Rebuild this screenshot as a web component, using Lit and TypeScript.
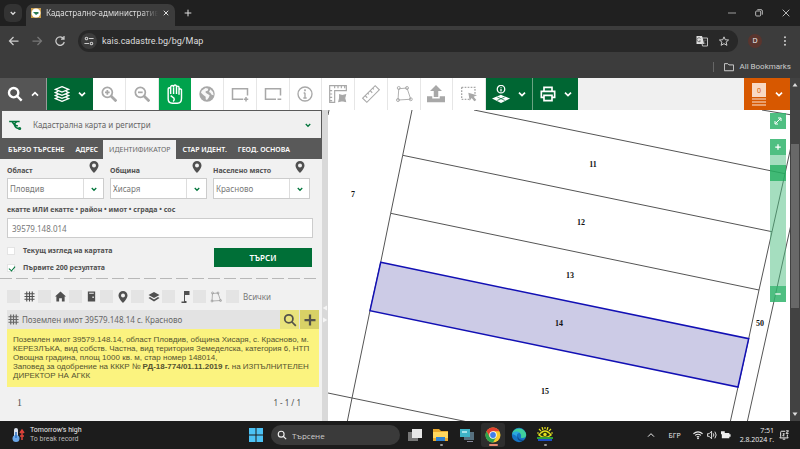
import { LitElement, html, css, svg, nothing, type TemplateResult } from "lit";
import { customElement, state } from "lit/decorators.js";
import { classMap } from "lit/directives/class-map.js";

/* Line icons share a 24-unit box and take the colour of their parent. */
const line = (size: string, width: number, body: unknown) => html`
  <svg class="icon ${size}" viewBox="0 0 24 24" fill="none" stroke="currentColor" stroke-width=${width} aria-hidden="true">${body}</svg>`;
const solid = (size: string, body: unknown) => html`
  <svg class="icon ${size}" viewBox="0 0 24 24" fill="currentColor" aria-hidden="true">${body}</svg>`;

const chevDown = (size = "s8") => line(size, 5, svg`<path d="M3 8l9 9 9-9"/>`);
const chevUp = (size = "s8") => line(size, 5, svg`<path d="M3 17l9-9 9 9"/>`);
const lens = svg`<circle cx="10" cy="10" r="7"/><path d="M15 15l7 7"/>`;
const gridBody = svg`<path d="M6 1v22M12 1v22M18 1v22M1 6h22M1 12h22M1 18h22"/>`;
const pinBody = svg`<path fill-rule="evenodd" d="M12 0a9 9 0 0 0-9 9c0 6 9 15 9 15s9-9 9-15a9 9 0 0 0-9-9zm0 5a4 4 0 1 1 0 8 4 4 0 0 1 0-8z"/>`;
const polyBody = svg`<path d="M5 5l11-1 5 15-17 1z"/><circle cx="5" cy="4" r="2"/><circle cx="16" cy="4" r="2"/><circle cx="21" cy="19" r="2"/><circle cx="4" cy="20" r="2"/>`;
const globeBody = svg`<circle cx="12" cy="12" r="11.5"/><path fill="#fff" d="M10 3l4 1-1 3-3 1 0 2 3 2 3 2-1 3-3 4-2-1 0-4-3-2-4-4 1-3 3-2zM17 5l4 4 1 5-3-1-2-3-2-1z" opacity=".9"/>`;

interface Tool { label: string; icon: TemplateResult; active?: boolean; }

const tools: Tool[] = [
  { label: "Увеличаване", icon: line("s16", 2.6, svg`<circle cx="9.5" cy="9.5" r="7.5"/><path d="M6 9.5h7M9.5 6v7"/><path d="M15 15l8 8" stroke-width="4"/>`) },
  { label: "Намаляване", icon: line("s16", 2.6, svg`<circle cx="9.5" cy="9.5" r="7.5"/><path d="M6 9.5h7"/><path d="M15 15l8 8" stroke-width="4"/>`) },
  { label: "Местене", active: true, icon: line("s20", 1.7, svg`<path d="M5 14V6a1.5 1.5 0 0 1 3 0V3.500a1.5 1.5 0 0 1 3.500 0V3a1.5 1.5 0 0 1 3.500 0v1a1.5 1.5 0 0 1 3 0v3a1.5 1.5 0 0 1 3 1v9c0 4-2 6-5 6h-6c-3 0-5-2-5-5zM8 6v6M11.500 4v8M15 4v8M18 7v6M8 14l4 3q1 2-1 4"/>`) },
  { label: "Цял обхват", icon: solid("s16", globeBody) },
  { label: "Увеличаване с рамка", icon: line("s18", 2, svg`<path d="M16 19H2V5h20v9M17 19h6M20 16v6"/>`) },
  { label: "Намаляване с рамка", icon: line("s18", 2, svg`<path d="M16 19H2V5h20v9M18 19h5"/>`) },
  { label: "Информация", icon: line("s16", 2, svg`<circle cx="12" cy="12" r="10.5"/><path d="M12 10v8M10 10.5h2M9.5 18h5"/><circle cx="12" cy="6.5" r=".6"/>`) },
  { label: "Измерване на площ", icon: line("s20", 1.4, svg`<path d="M2 2h20v6H8v14H2zM8 2v3M12 2v3M16 2v3M20 2v3M2 8h3M2 12h3M2 16h3M2 20h3"/><path fill="currentColor" d="M14 13l3 1 4-1-1 4 1 4-4-1-4 1 1-4z"/>`) },
  { label: "Измерване на разстояние", icon: line("s20", 1.3, svg`<path d="M2 17L17 2l5 5L7 22zM5 14l2.5 2.5M8 11l1.5 1.5M11 8l2.5 2.5M14 5l1.5 1.5"/>`) },
  { label: "Полигон", icon: line("s18", 1.2, polyBody) },
  { label: "Качване", icon: solid("s18", svg`<path d="M12 0l8 8h-5v8H9V8H4zM0 15h7v3h10v-3h7v8H0z"/>`) },
  { label: "Избор", icon: line("s16", 2, svg`<path stroke-dasharray="2.5 2" d="M1 2h20v10M1 2v18h12"/><path fill="currentColor" stroke="none" d="M11 10l13 4-5 2 4 5-3 2-4-5-3 4z"/>`) },
];

const kinds = [
  { label: "Поземлени имоти", icon: line("s11", 2.4, gridBody) },
  { label: "Сгради", icon: solid("s11", svg`<path d="M12 1l12 11h-3v11h-6v-7H9v7H3V12H0z"/>`) },
  { label: "Обекти", icon: solid("s11", svg`<path fill-rule="evenodd" d="M4 1h16v22H4zM7 4v2h10V4zm7 8v3h3v-3z"/>`) },
  { label: "Адреси", icon: solid("s12", pinBody) },
  { label: "Слоеве", icon: solid("s12", svg`<path d="M12 2l11 6-11 6L1 8zM4 12l8 5 8-5 3 2-11 7-11-7z"/>`) },
  { label: "Геодезични точки", icon: solid("s12", svg`<path d="M10 0h11v8h-9v12h3v4H5v-3h5z"/>`) },
  { label: "Контури", icon: line("s12 pale", 1.5, polyBody) },
];

const chevThin = line("s8", 3, svg`<path d="M3 17l9-9 9 9"/>`);

@customElement("app-root")
export class AppRoot extends LitElement {
  @state() private tab = 2;
  @state() private code = "39579.148.014";

  private tabs = ["БЪРЗО ТЪРСЕНЕ", "АДРЕС", "ИДЕНТИФИКАТОР", "СТАР ИДЕНТ.", "ГЕОД. ОСНОВА"];
  private places = [["Област", "Пловдив"], ["Община", "Хисаря"], ["Населено място", "Красново"]];

  static styles = css`
    :host { display: flex; flex-direction: column; min-height: 100vh; background: #1c1c1c; color: #505050;
      font: 8px/12px "Noto Sans", "Liberation Sans", sans-serif; overflow: hidden; }
    * { box-sizing: border-box; }
    button, select, input { font: inherit; color: inherit; margin: 0; padding: 0; border: 0; border-radius: 0; background: none; }
    button { display: flex; align-items: center; justify-content: center; }
    a { color: inherit; text-decoration: none; }
    .icon { display: block; flex: none; }
    .s6 { width: 6px; height: 6px; } .s8 { width: 8px; height: 8px; } .s10 { width: 10px; height: 10px; }
    .s11 { width: 11px; height: 11px; } .s12 { width: 12px; height: 12px; } .s14 { width: 14px; height: 14px; }
    .s16 { width: 16px; height: 16px; } .s18 { width: 18px; height: 18px; } .s20 { width: 20px; height: 20px; }
    .basket { width: 16px; height: 24px; }
    .pale { color: #999; }

    /* browser window */
    .strip { display: flex; height: 26px; background: #202020; color: #ddd; }
    .tablist { width: 18px; height: 18px; margin: 4px 4px 0; border-radius: 6px; background: #333; }
    .tab { display: flex; align-items: center; gap: 5px; width: 149px; height: 22px; margin-top: 4px; padding: 0 6px 4px 5px;
      border-radius: 7px 7px 0 0; background: #3c3c3c; }
    .favicon { width: 10px; height: 10px; }
    .tabname { flex: 1; overflow: hidden; white-space: nowrap; -webkit-mask-image: linear-gradient(90deg, #000 85%, transparent); }
    .newtab { width: 26px; height: 26px; }
    .win { display: flex; gap: 19px; margin-left: auto; padding-right: 10px; }
    .bar { display: flex; align-items: center; height: 29px; padding: 0 10px 0 8px; background: #3c3c3c; color: #ccc; }
    .nav { display: flex; gap: 11px; padding-right: 12px; }
    .dim { color: #777; }
    .address { flex: 1; display: flex; align-items: center; height: 22px; padding: 0 9px 0 3px; border-radius: 11px; background: #282828; gap: 5px; }
    .site { width: 16px; height: 16px; border-radius: 8px; background: #3c3c3c; }
    .url { flex: 1; min-width: 0; font: 9px/12px Roboto, "Noto Sans", sans-serif; outline: 0; color: #ddd; }
    .address .icon + .icon { margin-left: 6px; }
    .avatar { width: 14px; height: 14px; margin: 0 18px 0 10px; border-radius: 7px; background: #5a352e; color: #eee; font-size: 7px; }
    .marks { display: flex; align-items: center; justify-content: flex-end; height: 23px; padding-right: 9px;
      background: #3c3c3c; color: #ccc; font: 8px/12px Roboto, "Noto Sans", sans-serif; }
    .marks a { padding-left: 10px; border-left: 1px solid #666; display: flex; align-items: center; gap: 5px; height: 10px; }

    /* page */
    .page { flex: 1; display: grid; grid-template-columns: 1fr 10px; }
    .site-body { display: flex; flex-direction: column; min-width: 0; }
    .scroll { display: flex; flex-direction: column; align-items: center; justify-content: space-between; padding: 4px 0; background: #424242; color: #ddd; position: relative; }
    .thumb { position: absolute; top: 66px; height: 164px; left: 1px; right: 1px; background: #686868; }
    .toolbar { display: flex; height: 32px; background: #f0f0f0; color: #fff; }
    .wide { width: 46px; gap: 8px; background: #006633; }
    .wide.find { width: 47px; background: #555; border-right: 1px solid #999; }
    .wide + .wide.print { border-left: 1px solid #6ba383; }
    .wide.list { margin-left: auto; background: #d75800; }
    .tools { display: grid; grid-template-columns: repeat(12, 1fr); width: 393px; background: #fff; }
    .tool { color: #a8a8a8; border-right: 1px solid #e6e6e6; }
    .tool.active { background: #00a24c; color: #fff; border-color: #00a24c; }
    .work { flex: 1; display: grid; grid-template-columns: 322px 6px 1fr; }
    .panel { background: #f1f1f1; display: flex; flex-direction: column; }
    .dark { background: #595959; }
    .theme { display: flex; align-items: center; gap: 11px; height: 27px; margin: 1px 1px 2px 2px; padding: 0 10px 0 6px;
      background: #f0f0f0; color: #666; }
    .theme select { flex: 1; }
    select { appearance: none; outline: 0; }
    .green { color: #00753b; }
    .tabs { display: flex; height: 19px; padding-left: 2px; color: #fff; font-size: 7px; font-weight: 600; }
    .tabs button { padding: 0 5px 0 6px; }
    .tabs button.on { background: #f1f1f1; color: #666; font-weight: 400; padding: 0 6px; }
    .form { padding: 0 9px 0 7px; }
    .places { display: grid; grid-template-columns: repeat(3, 97px); gap: 6px; }
    .caption { display: flex; align-items: center; justify-content: space-between; height: 19px; padding-right: 4px; font-weight: 700; font-size: 7px; }
    .caption label { padding-top: 4px; }
    .caption .icon { margin-bottom: 4px; }
    .choice { display: flex; align-items: center; height: 21px; border: 1px solid #ccc; background: #fff; color: #777; }
    .choice select { flex: 1; min-width: 0; height: 19px; padding-left: 2px; }
    .choice .drop { display: flex; align-items: center; justify-content: center; width: 20px; height: 19px; border-left: 1px solid #ddd; pointer-events: none; }
    .codelabel { display: block; padding: 5px 0 2px; font-weight: 700; font-size: 7px; }
    .code { width: 100%; height: 20px; padding: 0 4px; border: 1px solid #ccc; background: #fff; color: #777; outline: 0; }
    .search { display: flex; justify-content: space-between; align-items: flex-start; padding: 4px 1px 0 0; height: 40px; }
    .opt { display: flex; align-items: center; gap: 8px; height: 17px; font-size: 7px; font-weight: 700; }
    .opt input { appearance: none; width: 8px; height: 8px; background: #fff; border: 1px solid #e4e4e4; position: relative; }
    .opt input:checked::after { content: ""; position: absolute; left: 2px; top: 0; width: 3px; height: 5px; border: solid #00753b; border-width: 0 1px 1px 0; transform: rotate(40deg); }
    .go { width: 98px; height: 19px; margin-top: 6px; background: #006f37; color: #fff; font-weight: 600; }
    .rule { height: 1px; margin-right: 3px; background: repeating-linear-gradient(90deg, #b8b8b8 0 12px, transparent 12px 16px); }
    .kinds { display: flex; align-items: center; height: 31px; padding: 4px 0 0 7px; }
    .kind { display: flex; align-items: center; width: 31px; gap: 4px; white-space: nowrap; }
    .kind input { appearance: none; width: 13px; height: 13px; background: #e4e4e4; flex: none; }
    .kind.all { width: auto; margin-left: 2px; color: #777; }
    .result { margin: 0 3px 0 7px; }
    .head { display: flex; height: 19px; background: #e3e3e3; color: #666; }
    .head a { flex: 1; display: flex; align-items: center; gap: 3px; padding-left: 1px; }
    .head button { width: 19px; margin-left: 1px; background: #e9e37c; color: #53524a; }
    .head button + button { background: #d8d166; }
    .about { margin: 0; padding: 6px; background: #fbf37f; color: #53522f; font: 8px/9px "Liberation Sans", sans-serif; height: 58px; }
    .pager { display: flex; justify-content: space-between; padding: 10px 21px 0 17px; }
    .num { font-family: "Liberation Serif", serif; font-size: 10px; }
    .split { background: #d9d9d9; color: #f5f5f5; display: flex; flex-direction: column; align-items: center; gap: 6px; padding-top: 195px; }
    .map { background: #fff; position: relative; min-height: 311px; }
    .chart { position: absolute; inset: 0; width: 100%; height: 100%; }
    .parcels { fill: none; stroke: #555; stroke-width: 1; }
    .parcel-on { fill: #cccbe6; stroke: #1210b4; stroke-width: 1.5; }
    .names { font: bold 8px "Liberation Serif", serif; fill: #111; text-anchor: middle; }
    .zoom { position: absolute; top: 3px; right: 4px; width: 16px; color: #fff; }
    .zoom button { width: 16px; height: 16px; background: rgba(48, 180, 108, .85); }
    .zoom .full { margin-bottom: 10px; }
    .track { height: 131px; padding-top: 10px; background: rgba(76, 190, 128, .5); }
    .knob { height: 16px; background: rgba(31, 172, 92, .75); }

    /* taskbar */
    .task { display: grid; grid-template-columns: 1fr auto 1fr; align-items: center; height: 28px; padding-left: 11px; color: #eee; background: #1c1c1c; font: 8px/9px "Open Sans", "Noto Sans", sans-serif; }
    .weather { display: flex; align-items: center; gap: 5px; font: 7px/9px Roboto, "Noto Sans", sans-serif; }
    .weather small { display: block; font-size: 7px; color: #bbb; }
    .apps { display: flex; align-items: center; gap: 10px; margin-right: 9px; }
    .apps .run { height: 24px; margin: 0 -4px; width: 24px; border-radius: 3px; flex-direction: column; gap: 1px; padding-top: 2px; }
    .apps .run.cur { background: #2e2e2e; }
    .run::after { content: ""; width: 3px; height: 2px; border-radius: 1px; background: #999; }
    .run.none::after { background: none; }
    .run.cur::after { width: 9px; background: #e88a70; }
    .find-box { display: flex; align-items: center; gap: 5px; width: 129px; height: 20px; margin: 0 -3px 0 -2px; padding: 0 6px; border-radius: 10px; background: #3a3a3a; }
    .find-box input { min-width: 0; flex: 1; outline: 0; }
    .find-box input::placeholder { color: #ccc; opacity: 1; }
    .tray { display: flex; align-items: center; justify-content: flex-end; gap: 4px; padding-right: 11px; font-size: 7px; }
    .tray .lang { margin: 0 8px 0 9px; }
    .clock { text-align: right; margin: 0 1px 0 5px; }
  `;

  private browser() {
    return html`
      <header>
        <div class="strip">
          <button class="tablist" aria-label="Търсене в раздели">${chevDown("s6")}</button>
          <div class="tab">
            <svg class="favicon" viewBox="0 0 10 10" aria-hidden="true"><rect width="10" height="10" fill="#c69b49"/><circle cx="5" cy="5" r="4.5" fill="#fff"/><path d="M2 4h5l1 1-3 2z" fill="#287b51"/></svg>
            <span class="tabname">Кадастрално-административн</span>
            <button aria-label="Затваряне">${line("s6", 4, svg`<path d="M3 3l18 18M21 3L3 21"/>`)}</button>
          </div>
          <button class="newtab" aria-label="Нов раздел">${line("s8", 3, svg`<path d="M12 2v20M2 12h20"/>`)}</button>
          <div class="win">
            <button aria-label="Минимизиране">${line("s8", 2, svg`<path d="M0 12h24"/>`)}</button>
            <button aria-label="Възстановяване">${line("s8", 2.4, svg`<rect x="2" y="6" width="15" height="15" rx="3"/><path d="M7 2h11q4 0 4 4v11"/>`)}</button>
            <button aria-label="Затваряне на прозореца">${line("s8", 2.4, svg`<path d="M2 2l20 20M22 2L2 22"/>`)}</button>
          </div>
        </div>
        <div class="bar">
          <div class="nav">
            <button aria-label="Назад">${line("s12", 2.5, svg`<path d="M21 12H4M11 4l-8 8 8 8"/>`)}</button>
            <button class="dim" aria-label="Напред">${line("s12", 2.5, svg`<path d="M3 12h17M13 4l8 8-8 8"/>`)}</button>
            <button aria-label="Презареждане">${line("s12", 2.5, svg`<path d="M19 7a8.5 8.5 0 1 0 1.5 7M20 2v6h-6"/>`)}</button>
          </div>
          <div class="address">
            <button class="site" aria-label="Информация за сайта">${line("s10", 2.6, svg`<circle cx="6" cy="6" r="3"/><path d="M12 6h11M1 18h11"/><circle cx="18" cy="18" r="3"/>`)}</button>
            <input class="url" aria-label="Адрес" value="kais.cadastre.bg/bg/Map">
            <svg class="icon s12" viewBox="0 0 24 24" aria-hidden="true"><path d="M10 6h13v16H13z" fill="none" stroke="#bbb" stroke-width="2"/><path d="M1 2h11l5 16H1z" fill="#ddd"/><path d="M9 7a4 4 0 1 0 0 5H6M14 11h7M18 9v2q-1 4-4 6M15 13l5 5" fill="none" stroke="#555" stroke-width="1.5"/></svg>
            ${line("s10", 2.4, svg`<path d="M12 2l3 7 8 .6-6 5 2 7.8-7-4-7 4 2-7.8-6-5L9 9z"/>`)}
          </div>
          <button class="avatar" aria-label="Профил">D</button>
          <button aria-label="Меню">${solid("s10", svg`<circle cx="12" cy="3" r="2.5"/><circle cx="12" cy="12" r="2.5"/><circle cx="12" cy="21" r="2.5"/>`)}</button>
        </div>
        <nav class="marks"><a href="#">${line("s10", 2.4, svg`<path d="M1 4h8l3 3h11v14H1z"/>`)}All Bookmarks</a></nav>
      </header>`;
  }

  private toolbar() {
    return html`
      <nav class="toolbar" aria-label="Инструменти">
        <button class="wide find" aria-label="Търсене">${line("s16", 3.6, lens)}${chevUp()}</button>
        <button class="wide" aria-label="Слоеве">
          ${line("s16", 2, svg`<path d="M12 1l10 4-10 4L2 5zM6 8l-4 2 10 4 10-4-4-2M6 12.5l-4 2 10 4 10-4-4-2M6 17l-4 2 10 4 10-4-4-2"/>`)}${chevDown()}</button>
        <div class="tools">${tools.map((t) => html`
          <button class=${classMap({ tool: true, active: !!t.active })} aria-label=${t.label}>${t.icon}</button>`)}</div>
        <button class="wide" aria-label="Информация за слой">
          ${line("s18", 1.7, svg`<circle cx="12" cy="5.5" r="5"/><path d="M12 5v3.5M12 2.5v1"/><path fill="currentColor" d="M12 14l10 4-10 5-10-5z"/><path stroke="#006633" stroke-width="1" d="M7 16l10 4.500M17 16L7 20.500"/>`)}${chevDown()}</button>
        <button class="wide print" aria-label="Печат">
          ${line("s16", 2.5, svg`<path d="M6 8V2h12v6M6 17H2V8h20v9h-4M6 14h12v8H6z"/>`)}${chevDown()}</button>
        <button class="wide list" aria-label="Списък">
          <svg class="icon basket" viewBox="0 0 16 24" aria-hidden="true"><path d="M1 1h14v14H1z" fill="#f8d9c4"/><path d="M1 17h14M1 20h14M1 23h14" stroke="#fbe6d8" stroke-width="1"/><text x="8" y="11" text-anchor="middle" font-size="7" fill="#d75800">0</text></svg>${chevDown()}</button>
      </nav>`;
  }

  private panel() {
    return html`
      <section class="panel">
        <div class="dark">
          <div class="theme">
            <svg class="icon s14 green" viewBox="0 0 24 24" fill="none" stroke="currentColor" stroke-width="2.5" aria-hidden="true"><path d="M2 6h18M7 7q3 2 4 5 2 6 8 6M15 7q-4 1-3 4 1 3 5 2"/><circle cx="20" cy="18" r="1.500"/></svg>
            <select aria-label="Тема"><option>Кадастрална карта и регистри</option></select>
            <span class="green">${chevDown("s6")}</span>
          </div>
          <div class="tabs" role="tablist">${this.tabs.map((name, i) => html`
            <button role="tab" class=${i === this.tab ? "on" : nothing} aria-selected=${i === this.tab} @click=${() => (this.tab = i)}>${name}</button>`)}</div>
        </div>
        <form class="form" @submit=${(e: Event) => e.preventDefault()}>
          <div class="places">${this.places.map(([label, value], i) => html`
            <div>
              <div class="caption"><label for="place${i}">${label}</label>${solid("s12", pinBody)}</div>
              <div class="choice"><select id="place${i}"><option>${value}</option></select><span class="drop green">${chevDown("s6")}</span></div>
            </div>`)}</div>
          <label class="codelabel" for="code">екатте ИЛИ екатте • район • имот • сграда • сос</label>
          <input class="code" id="code" .value=${this.code} @input=${(e: Event) => (this.code = (e.target as HTMLInputElement).value)}>
          <div class="search">
            <div>
              <label class="opt"><input type="checkbox">Текущ изглед на картата</label>
              <label class="opt"><input type="checkbox" checked>Първите 200 резултата</label>
            </div>
            <button class="go">ТЪРСИ</button>
          </div>
        </form>
        <div class="rule"></div>
        <div class="kinds">${kinds.map((k) => html`
          <label class="kind"><input type="checkbox" aria-label=${k.label}>${k.icon}</label>`)}
          <label class="kind all"><input type="checkbox">Всички</label>
        </div>
        <article class="result">
          <div class="head">
            <a href="#">${line("s11", 2.6, gridBody)}Поземлен имот 39579.148.14 с. Красново</a>
            <button aria-label="Покажи">${line("s14", 3, lens)}</button>
            <button aria-label="Добави">${line("s12", 4.5, svg`<path d="M12 1v22M1 12h22"/>`)}</button>
          </div>
          <p class="about">Поземлен имот 39579.148.14, област Пловдив, община Хисаря, с. Красново, м. КЕРЕЗЛЪКА, вид собств. Частна, вид територия Земеделска, категория 6, НТП Овощна градина, площ 1000 кв. м, стар номер 148014,<br>Заповед за одобрение на КККР № <b>РД-18-774/01.11.2019 г.</b> на ИЗПЪЛНИТЕЛЕН ДИРЕКТОР НА АГКК</p>
        </article>
        <div class="pager"><a class="num" href="#">1</a><span>1 - 1 / 1</span></div>
      </section>`;
  }

  private map() {
    const names: [number, number, string][] = [
      [265, 57, "11"], [253, 115, "12"], [242, 168, "13"], [231, 216, "14"], [217, 284, "15"], [25, 87, "7"], [432, 216, "50"],
    ];
    return html`
      <main class="map">
        <svg class="chart" role="img" aria-label="Кадастрална карта">
          <path class="parcels" d="M84 0L74.7 45.3 62.7 103.3 52.7 152.3 42 200.7 24 288 19 313M146 0L457 63.7M74.7 45.3L444 121.7M62.7 103.3L431 180M464 32L457 63.7 444 121.7 431 180 420.7 228.7 410 277 402 313M464 110L419 313M0 283L24 288 140 312M434 0L464 5M0 5L1 0"/>
          <path class="parcel-on" d="M52.7 152.3L420.7 228.7 410 277 42 200.7z"/>
          <g class="names">${names.map(([x, y, t]) => svg`<text x=${x} y=${y}>${t}</text>`)}</g>
        </svg>
        <div class="zoom">
          <button class="full" aria-label="Цял екран">${line("s8", 3, svg`<path d="M4 20L20 4M12 3h9v9M3 12v9h9"/>`)}</button>
          <button aria-label="Приближаване">${line("s6", 5, svg`<path d="M12 1v22M1 12h22"/>`)}</button>
          <div class="track"><div class="knob"></div></div>
          <button aria-label="Отдалечаване">${line("s6", 5, svg`<path d="M1 12h22"/>`)}</button>
        </div>
      </main>`;
  }

  private taskbar() {
    return html`
      <footer class="task">
        <div class="weather">
          <svg class="icon s14" viewBox="0 0 14 14" aria-hidden="true"><path d="M5 2v8" stroke="#d8dfea" stroke-width="4" stroke-linecap="round"/><circle cx="5" cy="10.5" r="3.5" fill="#6aa6e8"/><path d="M5 4v6" stroke="#2d6fc0" stroke-width="1.5"/><path d="M11 12V3M9 5l2-3 2 3M9 8h4" fill="none" stroke="#e0433a" stroke-width="1.5"/></svg>
          <div>Tomorrow's high<small>To break record</small></div>
        </div>
        <div class="apps">
          <button aria-label="Старт"><svg class="icon s14" viewBox="0 0 14 14" fill="#4cc2f5"><path d="M0 0h6.5v6.5H0zM7.5 0H14v6.5H7.5zM0 7.5h6.5V14H0zM7.5 7.5H14V14H7.5z"/></svg></button>
          <label class="find-box">${line("s10", 2.8, lens)}<input placeholder="Търсене" aria-label="Търсене"></label>
          <button class="run none" aria-label="Изглед на задачите"><svg class="icon s16" viewBox="0 0 16 16"><path d="M1 5h10v9H1z" fill="#777"/><path d="M5 2h10v9H5z" fill="#e6e6e6"/></svg></button>
          <button class="run" aria-label="Файлове"><svg class="icon s16" viewBox="0 0 16 16"><path d="M0 2h6l2 2h7v10H0z" fill="#e8a92e"/><path d="M0 5h15v6H0z" fill="#ffd75e"/><path d="M3 10h9v4H3z" fill="#2d83d4"/></svg></button>
          <button class="run none" aria-label="Отдалечен достъп"><svg class="icon s16" viewBox="0 0 16 16"><path d="M5 5h10v8H5z" fill="#56707f"/><path d="M1 2h10v8H1z" fill="#3fb3c6"/><path d="M3 4h5v2H3z" fill="#a5e2ea"/><path d="M8 14h6v1H8z" fill="#889"/></svg></button>
          <button class="run cur" aria-label="Chrome"><svg class="icon s16" viewBox="0 0 16 16"><circle cx="8" cy="8" r="7.5" fill="#f7c92d"/><path d="M1.5 4.25A7.5 7.5 0 0 1 14.5 4.25H8L4.75 9.9z" fill="#e2402f"/><path d="M1.5 4.25A7.5 7.5 0 0 0 8 15.5L11.25 9.9H4.75z" fill="#2ca14f"/><circle cx="8" cy="8" r="3.7" fill="#fff"/><circle cx="8" cy="8" r="2.9" fill="#3f7ee8"/></svg></button>
          <button class="run none" aria-label="Edge"><svg class="icon s16" viewBox="0 0 16 16"><circle cx="8" cy="8" r="7.2" fill="#1674c4"/><path d="M1 7a7.2 7.2 0 0 1 14.2 1q0 3-4 3-2 0-1-2c0-5-7-5-9.2-2z" fill="#3fcf9c"/><path d="M1 7q4-5 8-1-4 0-3 4c-2-3-4-2-5-3z" fill="#2ba8e0"/><path d="M7 8q-1 5 6 5l-2 1q-6 0-4-6z" fill="#0d4a8c"/></svg></button>
          <button class="run" aria-label="Карти"><svg class="icon s16" viewBox="0 0 16 16"><path d="M2 8q6-8 12 0-6 5-12 0z" fill="#26330a" stroke="#e3e01f" stroke-width="1.500"/><circle cx="8" cy="7.500" r="1.700" fill="#e3e01f"/><path d="M2 2l2 2M5 0l1 3M8 0v2M11 0l-1 3M14 2l-2 2M0 6h2M14 6h2" stroke="#e3e01f" stroke-width="1.200"/><path d="M0 10h16v2H0z" fill="#2e9e38"/><path d="M1 12h14v2H1z" fill="#1e4fc6"/></svg></button>
        </div>
        <div class="tray">
          ${chevThin}
          <span class="lang">БГР</span>
          ${line("s10", 2.5, svg`<path d="M1 9q11-9 22 0M5 13q7-6 14 0M9 17q3-3 6 0"/><circle cx="12" cy="20" r="1"/>`)}
          ${line("s10", 2.2, svg`<path d="M1 9h4l6-6v18l-6-6H1zM15 8q3 4 0 8M19 4q6 8 0 16"/>`)}
          ${solid("s10", svg`<path d="M2 7h18v3h3v6h-3v4H2zM0 3h9v7H0z"/>`)}
          <div class="clock">7:51<br>2.8.2024 г.</div>
          ${line("s10", 2.4, svg`<path d="M15 3H6Q4 3 4 6v10l-2 3h20l-2-3v-5M9 22h6M17 2h6l-6 6h6M9 9h4l-4 5h4"/>`)}
        </div>
      </footer>`;
  }

  render() {
    return html`
      ${this.browser()}
      <div class="page">
        <div class="site-body">
          ${this.toolbar()}
          <div class="work">
            ${this.panel()}
            <div class="split">${solid("s6", svg`<path d="M20 2v20L3 12z"/>`)}${solid("s6", svg`<path d="M4 2v20l17-10z"/>`)}</div>
            ${this.map()}
          </div>
        </div>
        <div class="scroll">${solid("s6", svg`<path d="M12 4l10 14H2z"/>`)}<div class="thumb"></div>${solid("s6", svg`<path d="M12 20L2 6h20z"/>`)}</div>
      </div>
      ${this.taskbar()}`;
  }
}
